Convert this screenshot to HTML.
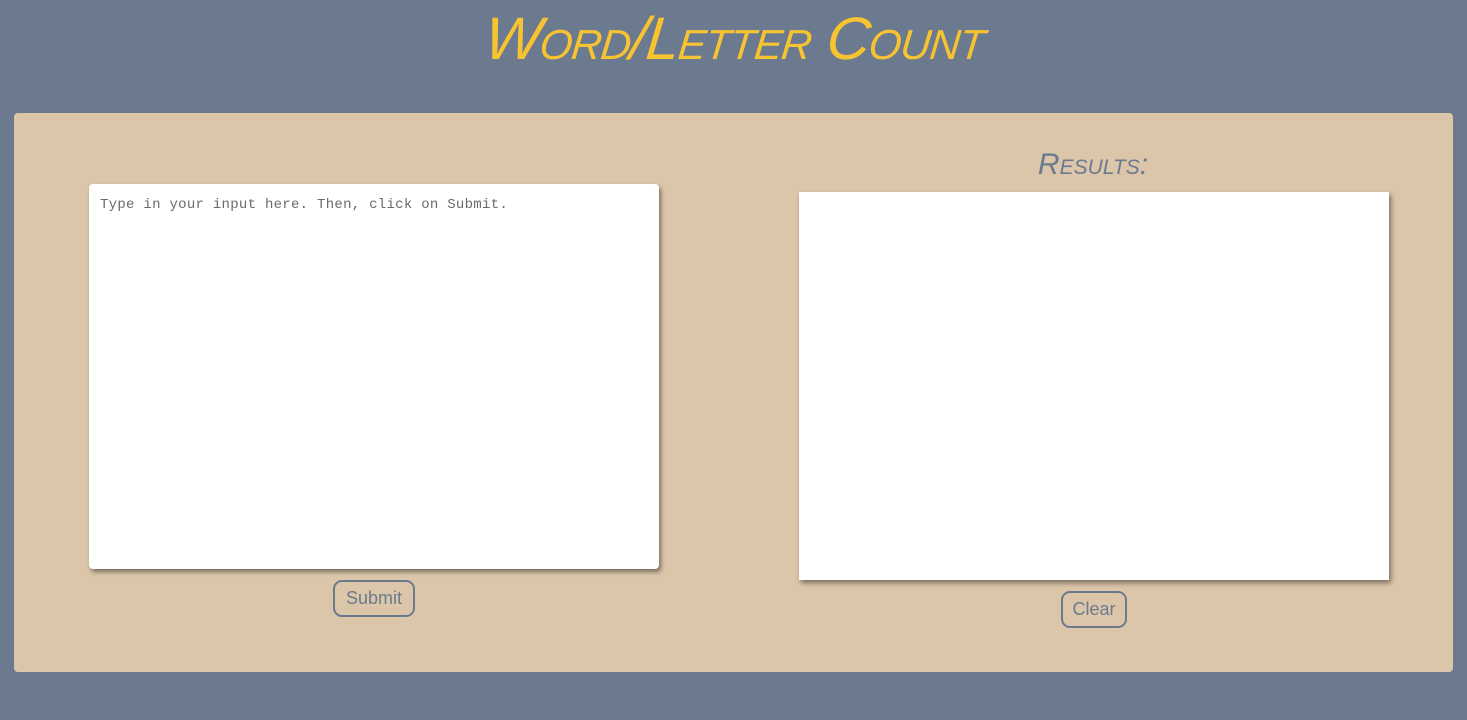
<!DOCTYPE html>
<html><head><style>
body{margin:0;width:1467px;height:720px;background:#6b7a8f;position:relative;overflow:hidden;font-family:"Liberation Sans",sans-serif}
h1{position:absolute;left:485px;top:4px;width:520px;margin:0;color:#f7c331;font:italic 300 60px "Liberation Sans",sans-serif;font-variant:small-caps;letter-spacing:-1px;white-space:nowrap;transform:skewX(-6deg)}
.panel{position:absolute;left:14px;top:113px;width:1439px;height:559px;background:#dcc6aa;border-radius:4px}
.ta{position:absolute;left:89px;top:184px;width:570px;height:385px;background:#fff;border-radius:4px;box-shadow:2px 3px 5px rgba(0,0,0,.45)}
.ta span{position:absolute;left:11px;top:13px;font:14px "Liberation Mono",monospace;color:#6b6b6b;letter-spacing:0.28px}
.res{position:absolute;left:799px;top:192px;width:590px;height:388px;background:#fff;box-shadow:2px 3px 5px rgba(0,0,0,.45)}
h2{position:absolute;left:993px;width:200px;text-align:center;top:148px;margin:0;color:#6b7a8f;font:italic 30px "Liberation Sans",sans-serif;font-variant:small-caps}
.btn{position:absolute;border:2px solid #6b7a8f;border-radius:9px;color:#6b7a8f;font-size:18px;text-align:center;box-sizing:border-box;line-height:32px}
</style></head><body>
<h1>Word/Letter Count</h1>
<div class="panel"></div>
<div class="ta"><span>Type in your input here. Then, click on Submit.</span></div>
<h2>Results:</h2>
<div class="res"></div>
<div class="btn" style="left:333px;top:580px;width:82px;height:37px">Submit</div>
<div class="btn" style="left:1061px;top:591px;width:66px;height:37px">Clear</div>
</body></html>
